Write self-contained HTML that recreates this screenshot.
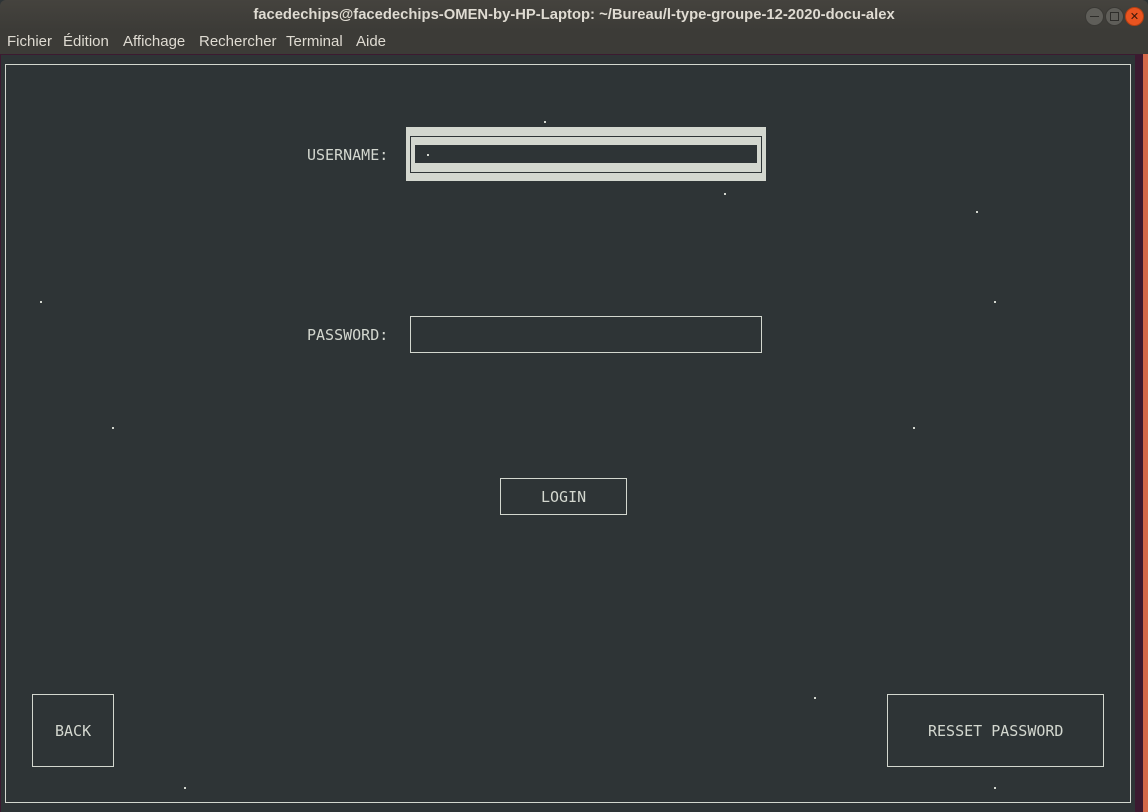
<!DOCTYPE html>
<html><head><meta charset="utf-8"><style>
body{margin:0;width:1148px;height:812px;overflow:hidden;background:#2e3436;position:relative;font-family:"DejaVu Sans Mono",monospace;font-size:15px;color:#d3d7cf}
.a{position:absolute}
.title{left:0;top:0;width:1148px;height:30px;background:linear-gradient(#45433e,#3c3b37);color:#dfdbd2;font-family:"Liberation Sans",sans-serif;font-weight:bold;font-size:14.8px;text-align:center;line-height:30px;border-radius:6px 6px 0 0}
.menu{left:0;top:30px;width:1148px;height:24px;background:#3c3b37;color:#dfdbd2;font-family:"Liberation Sans",sans-serif;font-size:15px;line-height:24px}
.menu span{position:absolute;top:0}
.b{position:absolute;border:1px solid #d3d7cf;box-sizing:border-box}
.d{position:absolute;width:2px;height:2px;background:#d3d7cf}
.t{position:absolute;line-height:18px;white-space:pre}
.btn{position:absolute;top:7px;width:17px;height:17px;border-radius:50%;background:#5f5e59;border:1px solid #3a3935}
</style></head><body>
<div class="a title">facedechips@facedechips-OMEN-by-HP-Laptop: ~/Bureau/l-type-groupe-12-2020-docu-alex</div>
<div class="btn" style="left:1085px"><div class="a" style="left:4px;top:8px;width:9px;height:1px;background:#2e2d2a"></div></div>
<div class="btn" style="left:1105px"><div class="a" style="left:4px;top:4px;width:7px;height:7px;border:1px solid #2e2d2a"></div></div>
<div class="btn" style="left:1125px;background:#e95420;border-color:#b33f13;color:#3a1608;font:bold 11px 'DejaVu Sans';text-align:center;line-height:17px">✕</div>
<div class="a menu"><span style="left:7px">Fichier</span><span style="left:63px">Édition</span><span style="left:123px">Affichage</span><span style="left:199px">Rechercher</span><span style="left:286px">Terminal</span><span style="left:356px">Aide</span></div>
<div class="a" style="left:0;top:54px;width:1148px;height:1px;background:#3c1a30"></div>
<div class="a" style="left:1135px;top:54px;width:8px;height:758px;background:#3c1a30"></div>
<div class="a" style="left:1143px;top:54px;width:5px;height:758px;background:#d4694a"></div>
<div class="a" style="left:0;top:54px;width:1px;height:758px;background:#3c1a30"></div>
<div class="b" style="left:5px;top:64px;width:1126px;height:739px"></div>
<div class="t" style="left:307px;top:146px">USERNAME:</div>
<div class="a" style="left:406px;top:127px;width:360px;height:54px;background:#d3d7cf"></div>
<div class="b" style="left:410px;top:136px;width:352px;height:37px;border-color:#2e3436"></div>
<div class="a" style="left:415px;top:145px;width:342px;height:18px;background:#2e3436"></div>
<div class="t" style="left:307px;top:326px">PASSWORD:</div>
<div class="b" style="left:410px;top:316px;width:352px;height:37px"></div>
<div class="b" style="left:500px;top:478px;width:127px;height:37px"></div>
<div class="t" style="left:541px;top:488px">LOGIN</div>
<div class="b" style="left:32px;top:694px;width:82px;height:73px"></div>
<div class="t" style="left:55px;top:722px">BACK</div>
<div class="b" style="left:887px;top:694px;width:217px;height:73px"></div>
<div class="t" style="left:928px;top:722px">RESSET PASSWORD</div>
<div class="d" style="left:544px;top:121px"></div>
<div class="d" style="left:724px;top:193px"></div>
<div class="d" style="left:976px;top:211px"></div>
<div class="d" style="left:40px;top:301px"></div>
<div class="d" style="left:994px;top:301px"></div>
<div class="d" style="left:112px;top:427px"></div>
<div class="d" style="left:913px;top:427px"></div>
<div class="d" style="left:814px;top:697px"></div>
<div class="d" style="left:184px;top:787px"></div>
<div class="d" style="left:994px;top:787px"></div>
<div class="d" style="left:427px;top:154px"></div>
</body></html>
